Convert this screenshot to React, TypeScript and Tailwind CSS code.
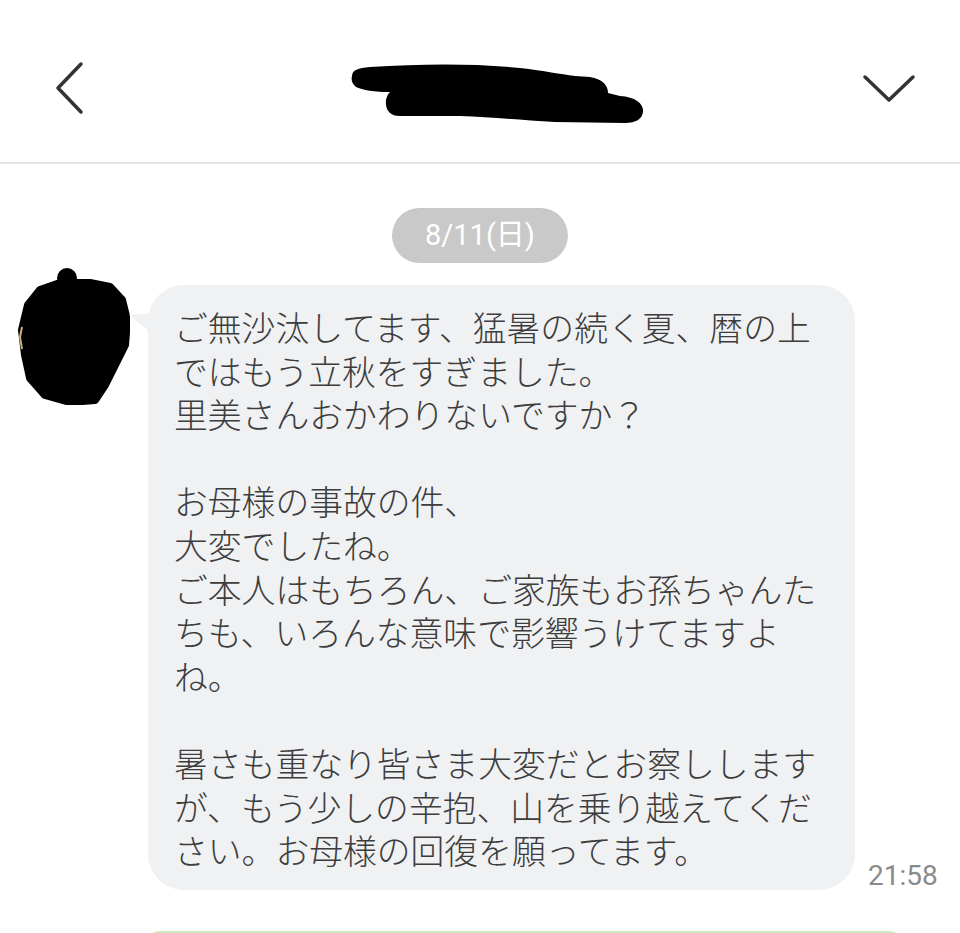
import React from "react";

const lines = [
  "ご無沙汰してます、猛暑の続く夏、暦の上",
  "ではもう立秋をすぎました。",
  "里美さんおかわりないですか？",
  "",
  "お母様の事故の件、",
  "大変でしたね。",
  "ご本人はもちろん、ご家族もお孫ちゃんた",
  "ちも、いろんな意味で影響うけてますよ",
  "ね。",
  "",
  "暑さも重なり皆さま大変だとお察しします",
  "が、もう少しの辛抱、山を乗り越えてくだ",
  "さい。お母様の回復を願ってます。",
];

export default function App() {
  return (
    <div
      className="w-[960px] h-[933px] overflow-hidden bg-white"
      style={{ fontFamily: 'Roboto, "Noto Sans CJK JP", sans-serif' }}
    >
      {/* Header */}
      <div className="h-[162px] flex items-start">
        <svg className="ml-[50px] mt-[58px] w-[40px] h-[60px]" viewBox="0 0 40 60">
          <path d="M31 6 L8 30 L31 54" fill="none" stroke="#333" strokeWidth="3.5" strokeLinecap="round" strokeLinejoin="round" />
        </svg>
        <svg className="ml-[250px] mt-[0px] w-[320px] h-[130px]" viewBox="340 0 320 130">
          <path
            d="M352 76 C352 70 358 68 370 67 C420 64 470 63 520 68 C545 71 560 74 575 76 L590 77 C602 79 608 85 608 93 L620 96 C636 97 644 104 643 112 C642 119 636 123 625 123 L555 122 C520 120 490 117 460 116 L400 116 C390 116 385 110 386 100 C387 96 388 94 390 92 C375 92 362 90 356 87 C352 84 351 80 352 76 Z"
            fill="#000"
          />
        </svg>
        <svg className="ml-[195px] mt-[60px] w-[70px] h-[50px]" viewBox="0 0 70 50">
          <path d="M10 17 L34 40 L58 17" fill="none" stroke="#333" strokeWidth="3.5" strokeLinecap="round" strokeLinejoin="round" />
        </svg>
      </div>
      <div className="h-[2px] bg-[#e3e3e3]" />

      {/* Date pill */}
      <div className="pt-[44px] flex justify-center">
        <div className="w-[176px] h-[55px] rounded-full bg-[#c9c9c9] flex items-center justify-center text-white text-[29px] leading-none">
          8/11(日)
        </div>
      </div>

      {/* Message row */}
      <div className="mt-[4px] flex items-start">
        <svg className="ml-[18px] w-[112px] h-[138px] shrink-0" viewBox="0 0 112 138">
          <circle cx="49" cy="11" r="10" fill="#000" />
          <path
            d="M22 23 L42 16 L72 16 L92 20 L104 33 L109 53 L107 78 L97 98 L87 118 L77 133 L52 135 L27 128 L12 111 L7 88 L4 63 L10 38 Z"
            fill="#000"
            stroke="#000"
            strokeWidth="8"
            strokeLinejoin="round"
          />
          <path d="M4 60 L2 70 L4 82" fill="none" stroke="#c9b27a" strokeWidth="2" />
        </svg>
        <div
          className="relative mt-[18px] ml-[18px] w-[707px] shrink-0 rounded-[36px] bg-[#f0f1f3] pl-[26px] pr-[8px] pt-[20px] pb-[18px] text-[#3d3d3d] text-[33.8px] font-light"
          style={{ fontFamily: '"Noto Sans CJK JP", sans-serif' }}
        >
          <svg className="absolute left-[-20px] top-[26px] w-[26px] h-[26px]" viewBox="0 0 26 26">
            <path d="M1 4 L26 2 L26 24 Z" fill="#f0f1f3" />
          </svg>
          {lines.map((l, i) => (
            <div key={i} className="h-[43.6px] leading-[43.6px] whitespace-nowrap">
              {l || "\u00a0"}
            </div>
          ))}
        </div>
        <div className="self-end ml-[13px] text-[28px] leading-none text-[#8a8a8a]">21:58</div>
      </div>

      {/* Next bubble peeking */}
      <div className="mt-[41px] ml-[143px] w-[763px] h-[80px] rounded-t-[18px] bg-[#eef8e8] border-t-2 border-[#cfe8c0]" />
    </div>
  );
}
